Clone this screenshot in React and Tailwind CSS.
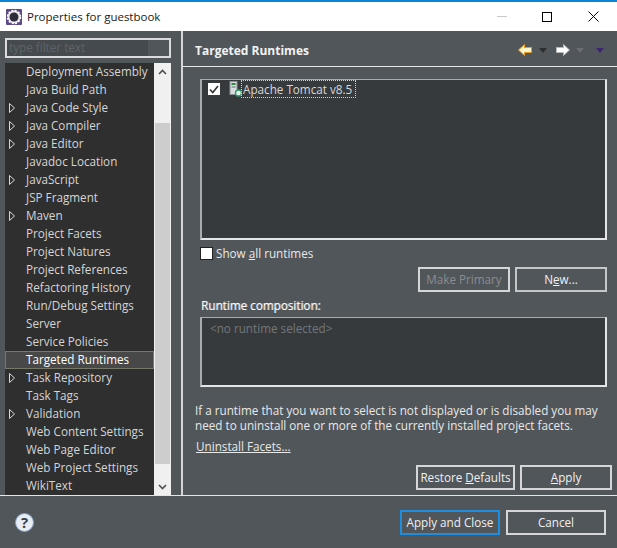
import React from 'react';

const treeItems = [
    { label: 'Deployment Assembly' },
    { label: 'Java Build Path' },
    { label: 'Java Code Style', arrow: true },
    { label: 'Java Compiler', arrow: true },
    { label: 'Java Editor', arrow: true },
    { label: 'Javadoc Location' },
    { label: 'JavaScript', arrow: true },
    { label: 'JSP Fragment' },
    { label: 'Maven', arrow: true },
    { label: 'Project Facets' },
    { label: 'Project Natures' },
    { label: 'Project References' },
    { label: 'Refactoring History' },
    { label: 'Run/Debug Settings' },
    { label: 'Server' },
    { label: 'Service Policies' },
    { label: 'Targeted Runtimes', selected: true },
    { label: 'Task Repository', arrow: true },
    { label: 'Task Tags' },
    { label: 'Validation', arrow: true },
    { label: 'Web Content Settings' },
    { label: 'Web Page Editor' },
    { label: 'Web Project Settings' },
    { label: 'WikiText' },
];

const Button = ({ className = '', children }) => (
    <button className={`h-[25px] flex items-center justify-center border-2 border-[#d4d6d7] text-[#f0f0f0] ${className}`}>
        {children}
    </button>
);

const Arrow = ({ fill, path }) => (
    <svg width="14" height="12" viewBox="0 0 14 12">
        <path d={path} fill={fill.inner} stroke={fill.outer} strokeWidth="1" />
    </svg>
);

const Caret = ({ color }) => (
    <svg width="8" height="5" viewBox="0 0 8 5"><path d="M0 0h8L4 5z" fill={color} /></svg>
);

const App = () => {
    return (
        <div className="w-[617px] h-[548px] overflow-hidden flex flex-col bg-[#51565a] text-[11.7px] leading-[15px] text-[#e8e8e8] font-['Open_Sans',sans-serif]">
            {/* title bar */}
            <div className="h-[31px] shrink-0 bg-white border-t-2 border-[#0a84d6] flex items-center">
                <svg className="ml-[6px]" width="16" height="16" viewBox="0 0 16 16">
                    <rect width="16" height="16" rx="1" fill="#5d4a86" />
                    <circle cx="8" cy="8" r="6.5" fill="#e6e6e6" stroke="#fff" strokeWidth="1.5" strokeDasharray="2 1.4" />
                    <circle cx="8" cy="8" r="4.5" fill="#2c2c3a" />
                </svg>
                <span className="ml-[5px] text-[11.5px] text-[#1a1a1a]">Properties for guestbook</span>
                <div className="ml-auto flex items-center">
                    <div className="w-[10px] h-px bg-[#c8c8c8] mr-[35px]" />
                    <div className="w-[10px] h-[10px] border border-black mr-[36px]" />
                    <svg className="mr-[18px]" width="11" height="11" viewBox="0 0 11 11">
                        <path d="M.5.5l10 10M10.5.5l-10 10" stroke="#000" strokeWidth="1" />
                    </svg>
                </div>
            </div>

            <div className="h-[464px] shrink-0 flex">
                {/* left column */}
                <div className="w-[181px] shrink-0 pl-[5px] pr-[10px] pt-[7px]">
                    <div className="h-[20px] border-2 border-[#d9dbdc] bg-[#51565a] flex">
                        <div className="w-[141px] bg-[#454a4e] pl-[2px] text-[#5f6468] leading-[15px]">type filter text</div>
                    </div>
                    <div className="mt-[5px] h-[432px] flex bg-[#2f2f2f]">
                        <div className="w-[149px] shrink-0">
                            {treeItems.map((item) => (
                                <div
                                    key={item.label}
                                    className={`h-[18px] flex items-center whitespace-nowrap pb-[2px] ${
                                        item.selected ? 'bg-[#484848] border border-[#77776a] text-white' : 'text-[#d5d5d5]'
                                    }`}
                                >
                                    <div className={`${item.selected ? 'w-[20px]' : 'w-[21px]'} shrink-0 flex pl-[4px] pt-[2px]`}>
                                        {item.arrow && (
                                            <svg width="6" height="10" viewBox="0 0 6 10">
                                                <path d="M.5.5L5.5 5 .5 9.5z" fill="none" stroke="#d8d8d8" />
                                            </svg>
                                        )}
                                    </div>
                                    <span>{item.label}</span>
                                </div>
                            ))}
                        </div>
                        <div className="w-[17px] shrink-0 bg-[#f0f0f0] flex flex-col items-center">
                            <div className="h-[17px] flex items-center">
                                <svg width="9" height="6" viewBox="0 0 9 6"><path d="M1 5l3.5-3.5L8 5" fill="none" stroke="#505050" strokeWidth="1.6" /></svg>
                            </div>
                            <div className="mt-[43px] w-[15px] h-[341px] bg-[#cdcdcd]" />
                            <div className="mt-auto h-[17px] flex items-center">
                                <svg width="9" height="6" viewBox="0 0 9 6"><path d="M1 1l3.5 3.5L8 1" fill="none" stroke="#505050" strokeWidth="1.6" /></svg>
                            </div>
                        </div>
                    </div>
                </div>

                {/* right column */}
                <div className="flex-1 min-w-0 border-l-2 border-[#d4d6d7] flex flex-col">
                    <div className="h-[35px] shrink-0 flex items-center pl-[12px] pt-[3px]">
                        <span className="font-bold text-[12px] text-[#f2f2f2]">Targeted Runtimes</span>
                        <div className="ml-auto flex items-center pr-[13px]">
                            <Arrow fill={{ inner: '#fff3c8', outer: '#e89a1c' }} path="M6.5 .5L.5 6l6 5.5V8.5h7v-5h-7z" />
                            <div className="ml-[7px]"><Caret color="#2e2e2e" /></div>
                            <div className="ml-[9px]"><Arrow fill={{ inner: '#ffffff', outer: '#b8b8b8' }} path="M7.5 .5l6 5.5-6 5.5V8.5h-7v-5h7z" /></div>
                            <div className="ml-[6px]"><Caret color="#6a6e72" /></div>
                            <div className="ml-[12px]"><Caret color="#3c2470" /></div>
                        </div>
                    </div>
                    <div className="h-px bg-[#e4e5e6] shrink-0" />
                    <div className="flex-1 pl-[12px] pr-[10px]">
                        <div className="mt-[12px] ml-[5px] h-[161px] border-2 border-t border-l-[#a9acae] border-t-[#a9acae] border-r-[#e4e5e6] border-b-[#e4e5e6] bg-[#373a3d]">
                            <div className="flex items-center h-[18px] ml-[6px]">
                                <div className="w-[12px] h-[12px] bg-white flex items-center justify-center">
                                    <svg width="10" height="9" viewBox="0 0 10 9"><path d="M1 4.5L3.8 7.5 9 1" fill="none" stroke="#333" strokeWidth="1.6" /></svg>
                                </div>
                                <svg className="ml-[9px]" width="13" height="16" viewBox="0 0 13 16">
                                    <rect x="1" y="0.5" width="7" height="13" fill="#d8dde0" stroke="#8a9094" />
                                    <rect x="2.5" y="2" width="4" height="2" fill="#2f8a3c" />
                                    <rect x="2.5" y="5.5" width="4" height="1" fill="#5a6a72" />
                                    <circle cx="9.5" cy="12" r="3" fill="#e8f5ee" stroke="#2f9e6a" strokeWidth="1.4" />
                                </svg>
                                <div className="ml-[-1px] h-[18px] pl-[1px] pr-[3px] border border-dotted border-[#d0d0d0] flex items-center text-[#d8d8d8] whitespace-nowrap">
                                    Apache Tomcat v8.5
                                </div>
                            </div>
                        </div>

                        <div className="mt-[7px] ml-[5px] flex items-center h-[13px]">
                            <div className="w-[13px] h-[13px] bg-white border border-[#222]" />
                            <span className="ml-[3px] text-[#e8e8e8]">Show <span className="underline">a</span>ll runtimes</span>
                        </div>

                        <div className="mt-[7px] flex justify-end gap-[5px]">
                            <Button className="w-[92px] !text-[#8a8d90]">Make Primary</Button>
                            <Button className="w-[92px] !border-[#c4c7c9]"><span>N<span className="underline">e</span>w...</span></Button>
                        </div>

                        <div className="mt-[3px] ml-[6px] h-[20px] flex items-center text-white [text-shadow:1px_0_0_#8f9295]">Runtime composition:</div>

                        <div className="mt-[2px] ml-[5px] h-[70px] border-2 border-t border-l-[#a9acae] border-t-[#a9acae] border-r-[#e4e5e6] border-b-[#e4e5e6] bg-[#373a3d] pl-[8px] pt-[3px] text-[#73777a]">
                            &lt;no runtime selected&gt;
                        </div>

                        <p className="mt-[16px] text-[#e8e8e8] whitespace-nowrap">If a runtime that you want to select is not displayed or is disabled you may</p>
                        <p className="text-[#e8e8e8] whitespace-nowrap">need to uninstall one or more of the currently installed project facets.</p>
                        <div className="mt-[6px] ml-px underline text-[#e8e8e8]">Uninstall Facets...</div>

                        <div className="mt-[11px] flex justify-end gap-[5px] mr-[-5px]">
                            <Button className="w-[99px]"><span>Restore <span className="underline">D</span>efaults</span></Button>
                            <Button className="w-[92px]"><span><span className="underline">A</span>pply</span></Button>
                        </div>
                    </div>
                </div>
            </div>

            <div className="h-px bg-[#e4e5e6] shrink-0" />

            {/* footer */}
            <div className="flex-1 flex items-center pl-[15px] pr-[11px]">
                <div className="w-[19px] h-[19px] rounded-full bg-[#e8edf4] border border-[#8aa0c0] flex items-center justify-center font-bold text-[15px] text-[#3a4048]">?</div>
                <div className="ml-auto flex gap-[6px]">
                    <Button className="w-[100px] !border-[#1e8fe0]">Apply and Close</Button>
                    <Button className="w-[100px]">Cancel</Button>
                </div>
            </div>
        </div>
    );
};

export default App;
